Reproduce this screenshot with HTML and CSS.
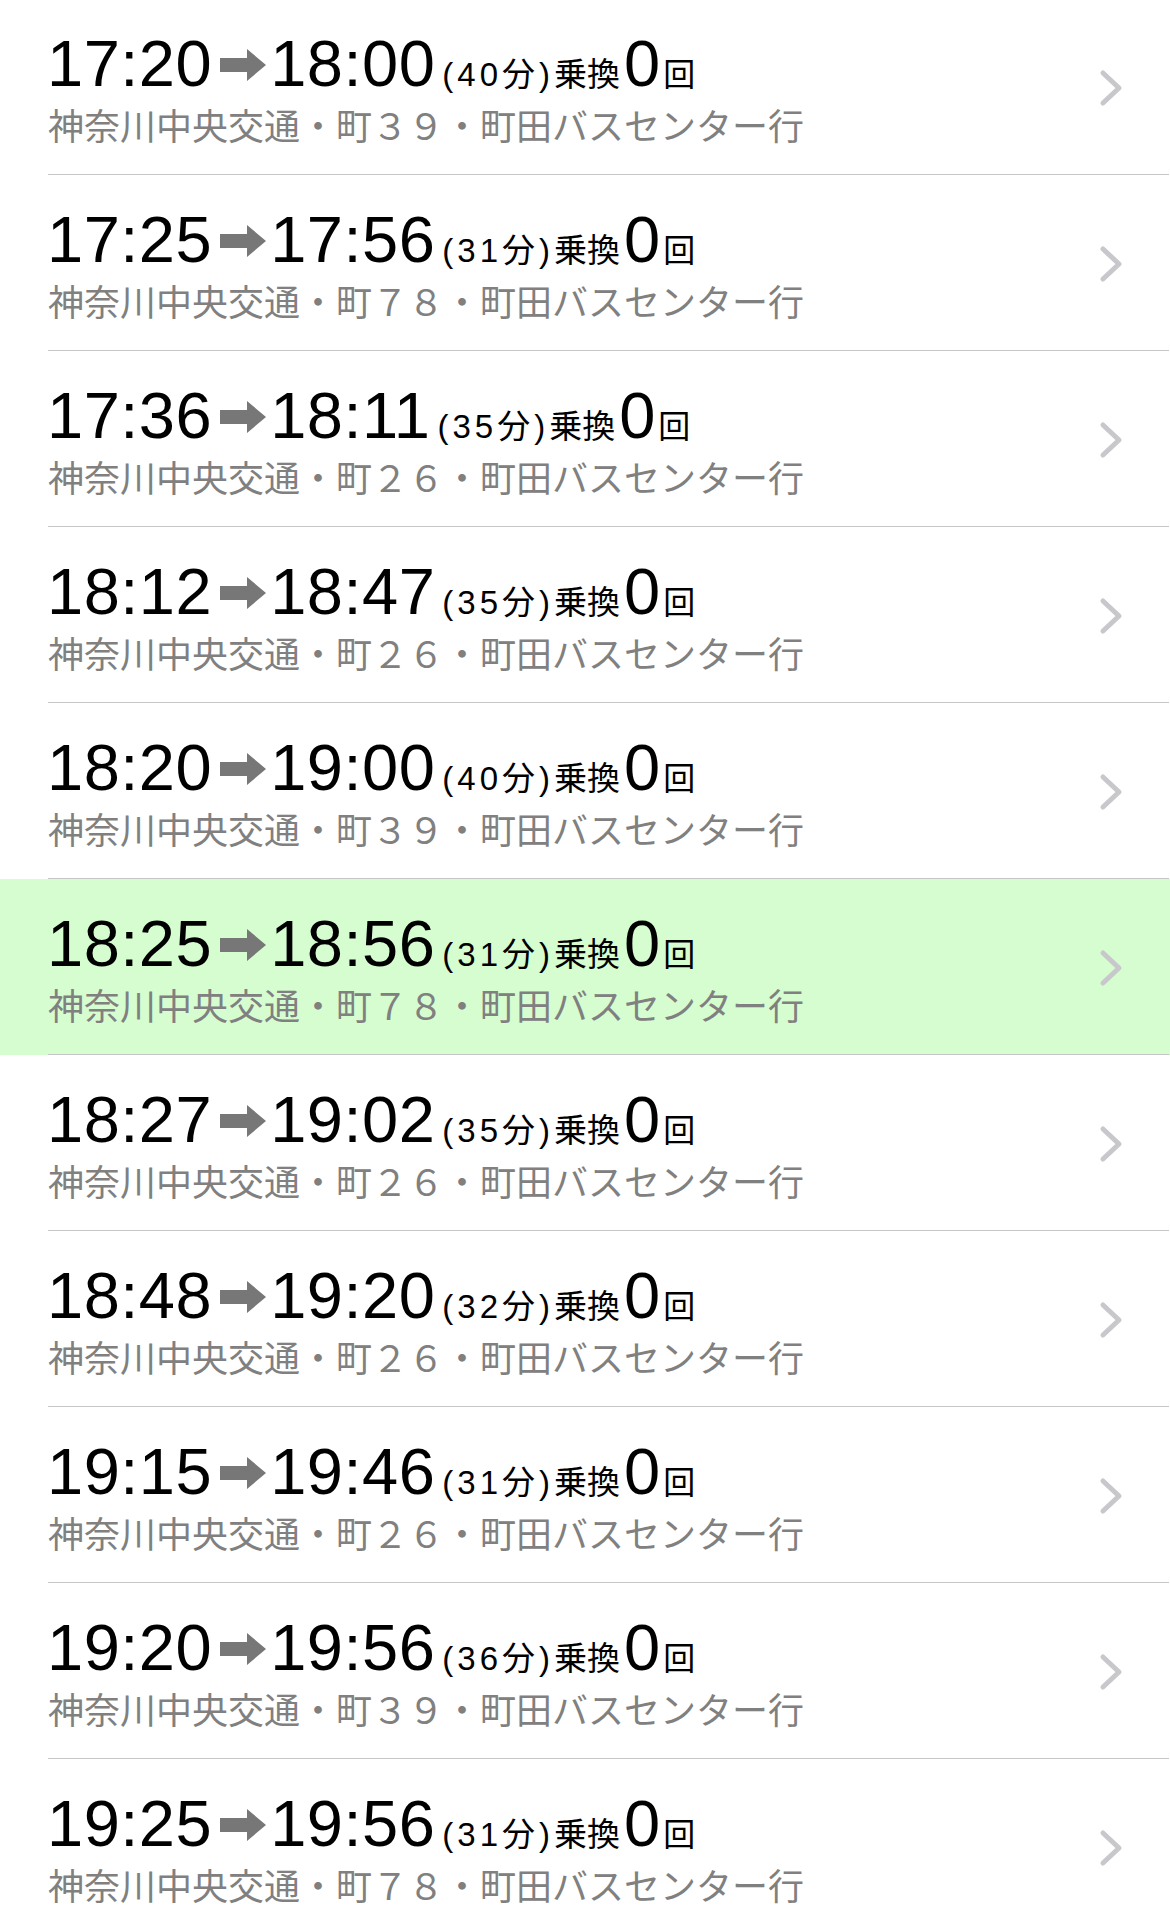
FILE: index.html
```html
<!DOCTYPE html>
<html lang="ja">

<head>
    <meta charset="UTF-8">
    <title>バス経路一覧</title>
    <link rel="stylesheet" href="styles.css">
</head>

<body>
    <ul class="routes" id="routes"></ul>
    <script>
        // 経路データ
        var data = [
            ["17:20", "18:00", "40", "３９"],
            ["17:25", "17:56", "31", "７８"],
            ["17:36", "18:11", "35", "２６"],
            ["18:12", "18:47", "35", "２６"],
            ["18:20", "19:00", "40", "３９"],
            ["18:25", "18:56", "31", "７８"],
            ["18:27", "19:02", "35", "２６"],
            ["18:48", "19:20", "32", "２６"],
            ["19:15", "19:46", "31", "２６"],
            ["19:20", "19:56", "36", "３９"],
            ["19:25", "19:56", "31", "７８"]
        ];
        var current = 5; // 選択中の行

        var arrow = '<svg class="arrow" width="46" height="32" viewBox="0 0 46 32">' +
            '<path d="M0 9h27V0l19 16-19 16v-9H0z" fill="#777"/></svg>';
        var chev = '<svg class="chev" width="26" height="40" viewBox="0 0 26 40">' +
            '<path d="M5 5l16 15L5 35" fill="none" stroke="#c7c7cc" stroke-width="5" stroke-linecap="round" stroke-linejoin="round"/></svg>';

        var list = document.getElementById("routes");
        for (var i = 0; i < data.length; i++) {
            var d = data[i];
            var li = document.createElement("li");
            if (i == current) {
                li.className = "current";
            }
            li.innerHTML =
                '<div class="cell">' +
                '<div class="info">' +
                '<div class="times">' +
                '<span class="time">' + d[0] + '</span>' + arrow +
                '<span class="time">' + d[1] + '</span>' +
                '<span class="dur">(' + d[2] + '分)</span>' +
                '<span class="label">乗換</span>' +
                '<span class="count">0</span>' +
                '<span class="unit">回</span>' +
                '</div>' +
                '<div class="line">神奈川中央交通・町' + d[3] + '・町田バスセンター行</div>' +
                '</div>' + chev +
                '</div>';
            list.appendChild(li);
        }
    </script>
</body>

</html>
```

FILE: styles.css
```css
* {
    padding: 0;
    margin: 0;
    list-style: none;
    border: 0;
}

body {
    background: #fff;
    overflow: hidden;
}

.routes {
    margin-top: -1px;
}

.routes li {
    background: #fff;
}

.routes li.current {
    background: #d6fdd0;
}

.cell {
    margin-left: 48px;
    margin-right: 1px;
    height: 175px;
    border-bottom: 1px solid #c6c6c8;
    display: flex;
    align-items: center;
    justify-content: space-between;
}

.info {
    padding-top: 1px;
}

.times {
    display: flex;
    align-items: baseline;
    height: 64px;
    margin-left: -1px;
    font-family: "Liberation Sans", "Noto Sans CJK JP", sans-serif;
    color: #000;
}

.time {
    font-size: 65px;
    line-height: 64px;
    letter-spacing: 0.5px;
}

.arrow {
    align-self: center;
    margin: 2px 4px 0 8px;
}

.dur {
    font-size: 33px;
    line-height: 32px;
    letter-spacing: 4px;
    margin-left: 7px;
}

.label {
    font-family: "Noto Sans CJK JP", sans-serif;
    font-size: 33px;
    line-height: 33px;
}

.count {
    font-size: 65px;
    line-height: 64px;
    margin-left: 4px;
}

.unit {
    font-family: "Noto Sans CJK JP", sans-serif;
    font-size: 32px;
    line-height: 32px;
    margin-left: 3px;
}

.line {
    margin-top: 10px;
    font-family: "Noto Sans CJK JP", sans-serif;
    font-size: 36px;
    line-height: 36px;
    color: #808080;
}

.chev {
    margin-right: 45px;
    margin-top: 2px;
}
```
